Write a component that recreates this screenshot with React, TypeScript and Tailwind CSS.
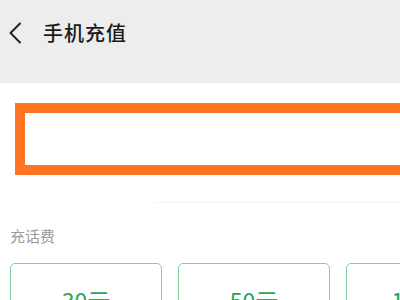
const AMOUNTS = ["30元", "50元", "100元"];

export default function App() {
  return (
    <div
      className="h-[300px] w-[400px] overflow-hidden bg-white"
      style={{ fontFamily: '"Noto Sans CJK SC", "Noto Sans", sans-serif' }}
    >
      <header className="flex h-[83px] items-start bg-[#ededed] pt-[14px]">
        <div className="flex h-[38px] items-center">
          <svg width="16" height="22" viewBox="0 0 16 22" className="ml-[7px]" fill="none">
            <path d="M13 1.5 L3.5 11 L13 20.5" stroke="#222" strokeWidth="2" strokeLinecap="round" strokeLinejoin="round" />
          </svg>
          <div className="ml-[20px] text-[20px] font-medium tracking-[1px] text-[#1b1b1b]">手机充值</div>
        </div>
      </header>
      <main className="pt-[20px]">
        <div className="ml-[15px] h-[72px] w-[400px] border-[10px] border-r-0 border-[#ff7322] bg-white" />
        <div className="ml-[155px] mt-[27px] h-px bg-[#f4f4f4]" />
        <div className="ml-[10px] mt-[23px] text-[15px] leading-[20px] text-[#9a9a9a]">充话费</div>
        <div className="ml-[10px] mt-[17px] flex gap-[16px]">
          {AMOUNTS.map((a) => (
            <div
              key={a}
              className="flex h-[70px] w-[152px] shrink-0 justify-center rounded-[5px] border border-[#86cf9f] pt-[21px] text-[23px] leading-[30px] text-[#2aa655]"
            >
              {a}
            </div>
          ))}
        </div>
      </main>
    </div>
  );
}
